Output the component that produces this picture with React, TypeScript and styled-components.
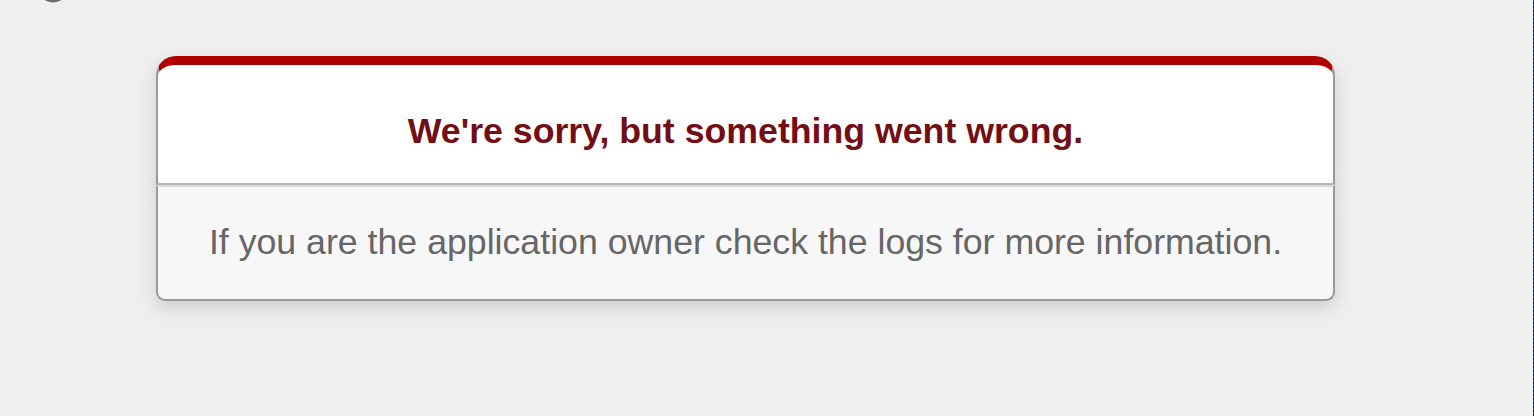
import React from "react";
import styled, { createGlobalStyle } from "styled-components";

const GlobalStyle = createGlobalStyle`
  html, body {
    margin: 0;
    padding: 0;
    background: #efefef;
  }
  body {
    font-family: "Liberation Sans", Arial, Helvetica, sans-serif;
    color: #2e2f30;
  }
`;

const Page = styled.div`
  display: flex;
  flex-direction: row;
  height: 416px;
  width: 1534px;
  overflow: hidden;
  background: #efefef;
`;

const Main = styled.div`
  flex: 1;
  display: flex;
  flex-direction: column;
`;

const Edge = styled.div`
  width: 1px;
  height: 100%;
  background: repeating-linear-gradient(
    to bottom,
    #1f4fd6 0px,
    #1f4fd6 2px,
    #1a1a2a 2px,
    #1a1a2a 4px
  );
`;

const TopMark = styled.svg`
  display: block;
  margin-left: 40px;
  width: 26px;
  height: 4px;
`;

const Dialog = styled.div`
  width: 1179px;
  margin: 52px 0 0 156px;
  text-align: center;
`;

const Header = styled.div`
  box-sizing: border-box;
  border: 2px solid #ccc;
  border-right-color: #999;
  border-left-color: #999;
  border-bottom-color: #bbb;
  border-top: 9px solid #b00100;
  border-top-left-radius: 20px;
  border-top-right-radius: 20px;
  background-color: #fff;
  padding: 16px 12% 0;
  box-shadow: 0 7px 18px rgba(50, 50, 50, 0.17);
`;

const Title = styled.h1`
  margin: 24px 0;
  font-size: 35.7px;
  line-height: 53.5px;
  font-weight: bold;
  color: #730e15;
  white-space: nowrap;
`;

const Message = styled.p`
  box-sizing: border-box;
  margin: 0;
  padding: 35.5px;
  font-size: 35.7px;
  line-height: 41px;
  background-color: #f7f7f7;
  border: 2px solid #ccc;
  border-right-color: #999;
  border-left-color: #999;
  border-bottom-color: #999;
  border-top-color: #dadada;
  border-bottom-left-radius: 9px;
  border-bottom-right-radius: 9px;
  color: #666;
  white-space: nowrap;
  box-shadow: 0 7px 18px rgba(50, 50, 50, 0.17);
`;

export default function App() {
  return (
    <>
      <GlobalStyle />
      <Page>
        <Main>
          <TopMark viewBox="0 0 26 4" aria-hidden="true">
            <ellipse cx="13" cy="-6" rx="12" ry="8.5" fill="#6b6b6b" />
          </TopMark>
          <Dialog>
            <Header>
              <Title>We're sorry, but something went wrong.</Title>
            </Header>
            <Message>
              If you are the application owner check the logs for more
              information.
            </Message>
          </Dialog>
        </Main>
        <Edge />
      </Page>
    </>
  );
}
